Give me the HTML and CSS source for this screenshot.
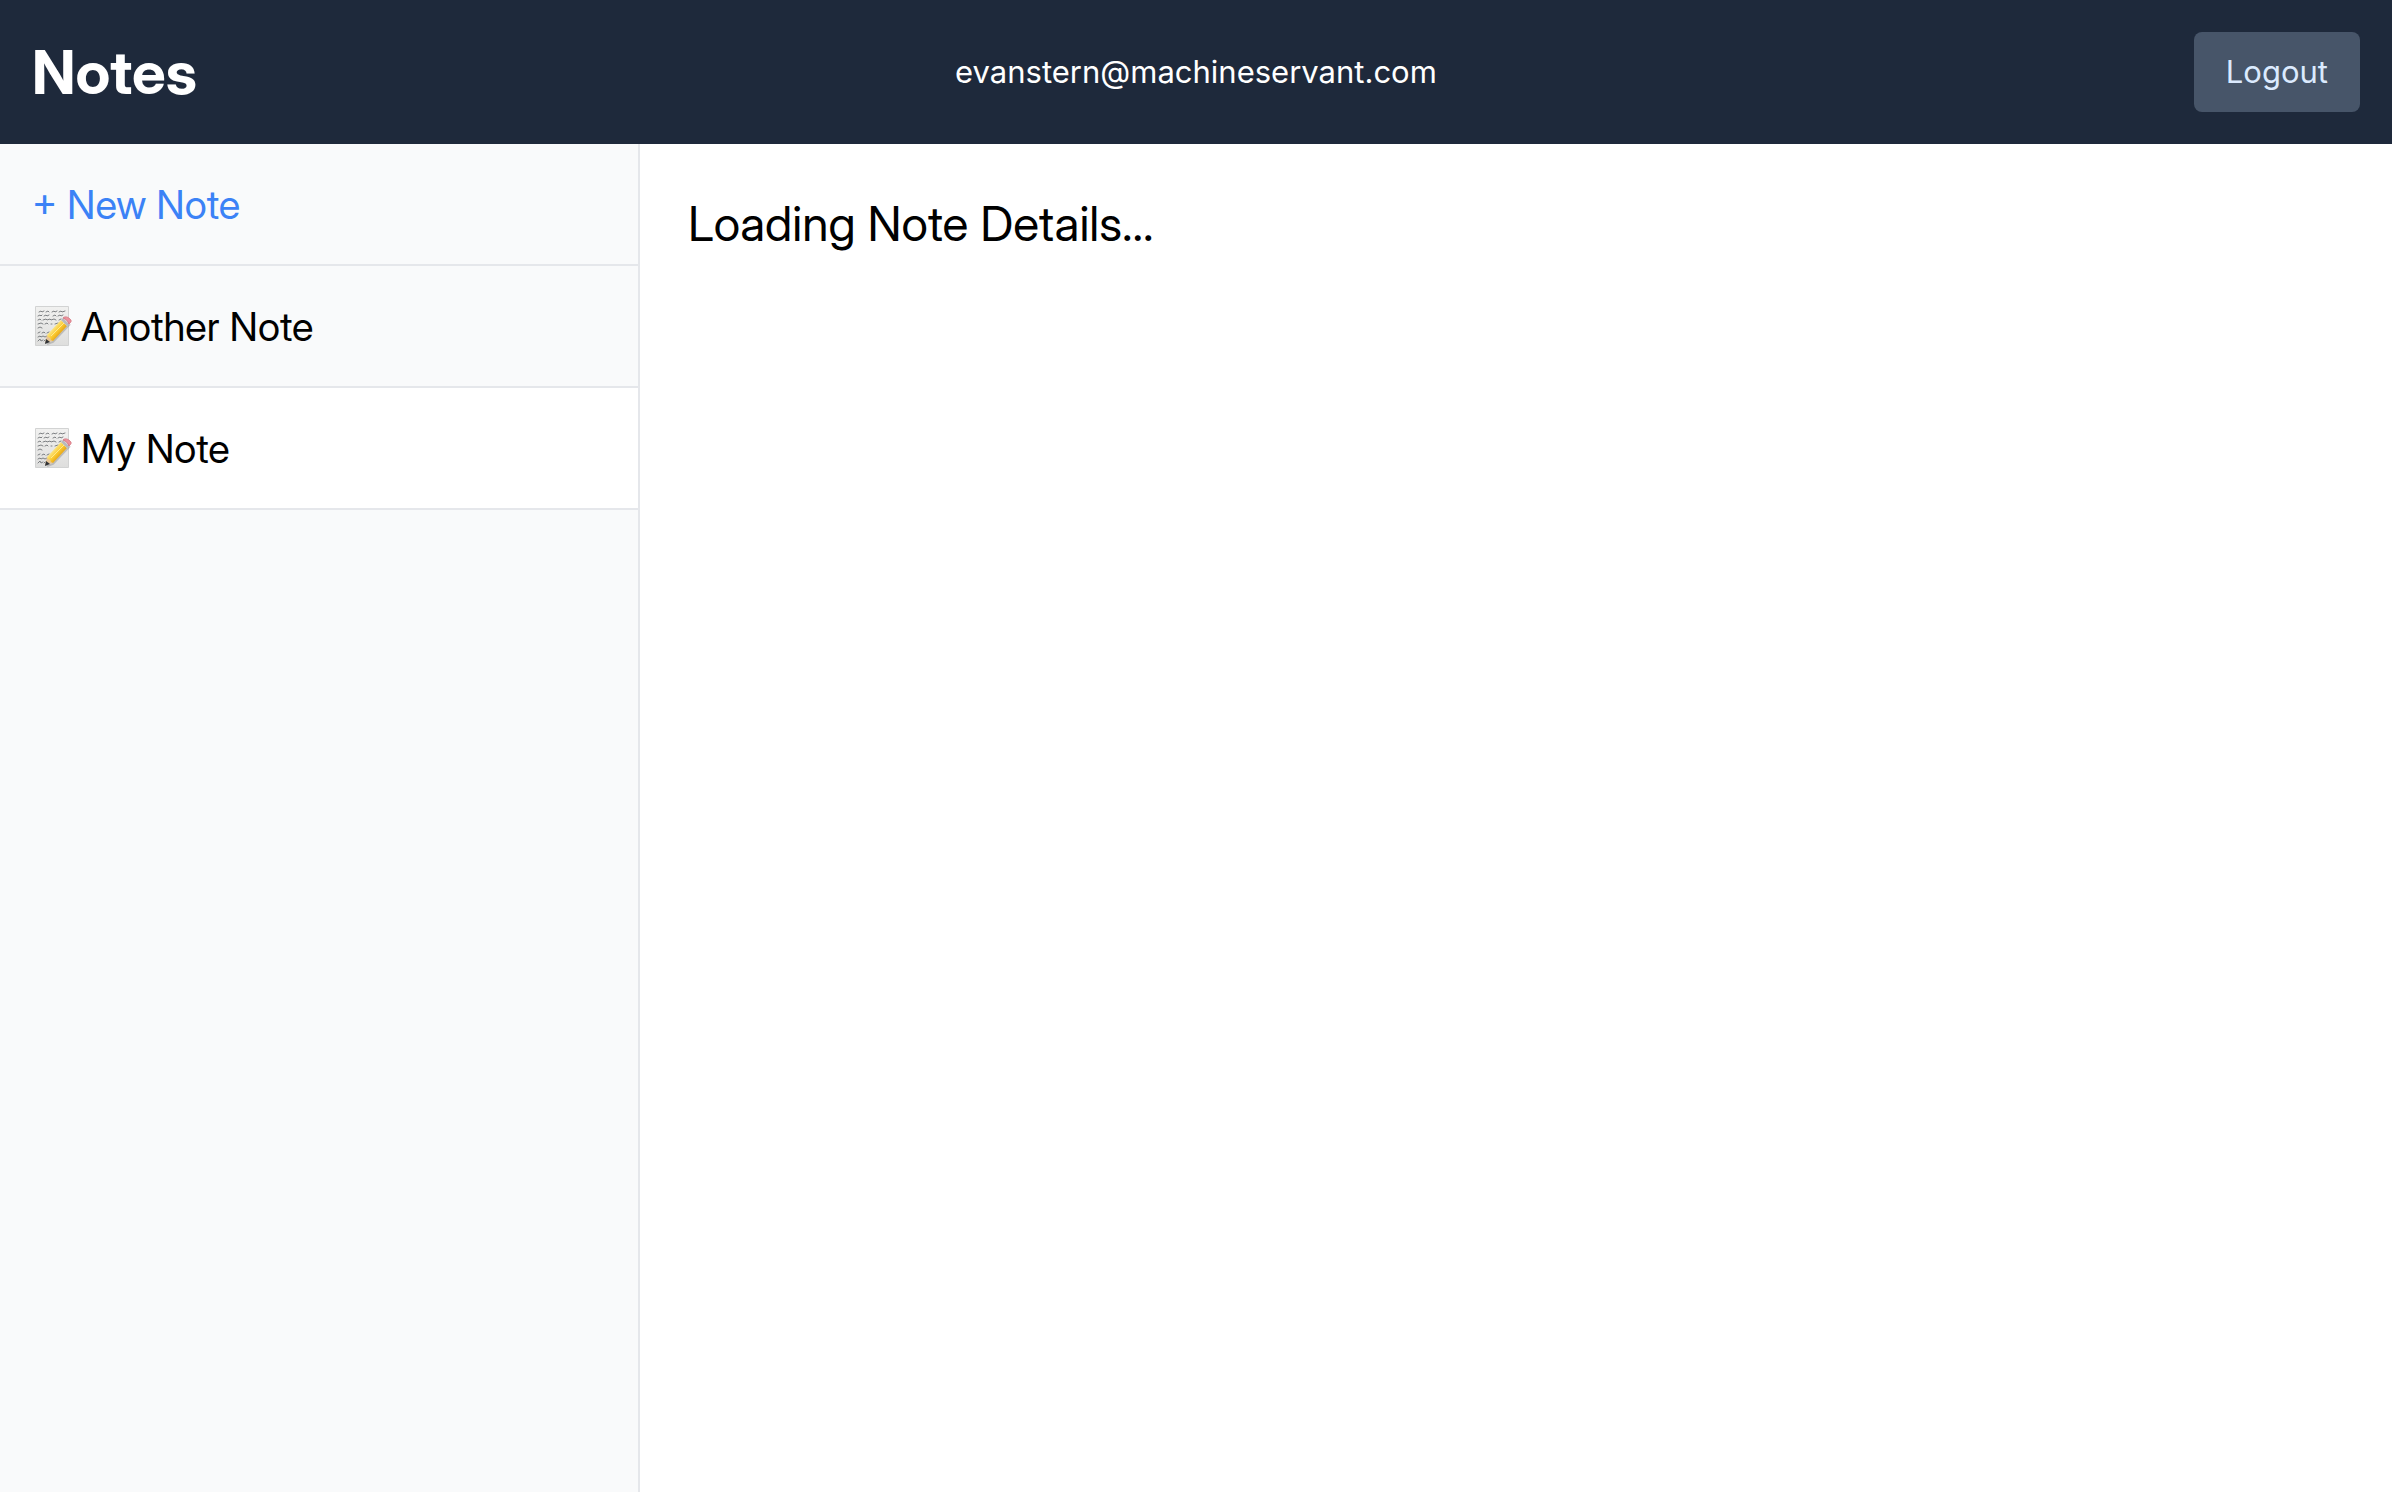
FILE: index.html
```html
<!DOCTYPE html>
<html lang="en">
<head>
<meta charset="utf-8">
<meta name="viewport" content="width=device-width, initial-scale=1">
<title>Notes</title>
<link rel="stylesheet" href="styles.css">
</head>
<body>
<svg class="defs" aria-hidden="true">
  <defs>
    <linearGradient id="paper" x1="0" y1="0" x2="0" y2="1"><stop offset="0" stop-color="#f1f1f0"/><stop offset="1" stop-color="#dededd"/></linearGradient>
    <linearGradient id="pencil" gradientUnits="userSpaceOnUse" x1="19" y1="22" x2="27" y2="29"><stop offset="0" stop-color="#fbe27a"/><stop offset=".4" stop-color="#fcca2f"/><stop offset="1" stop-color="#d8920f"/></linearGradient>
  </defs>
  <symbol id="memo" viewBox="0 0 38 42">
    <path d="M.5.5h33v39H.5z" fill="url(#paper)" stroke="#d2d3d3"/>
    <g fill="none" stroke="#7d8083" stroke-width="1" stroke-linecap="round">
      <path d="M4 6l2-1 1 1 2-1M11 6l2-1 1 1M17 6l2-1 1 1 2-1M24 6l2-1 1 1 3-1"/>
      <path d="M3 10l2-1 1 1 1-1M9 10l2-1 1 1 2-1M18 10l2-1 1 1M23 10l2-1 1 1 2-1"/>
      <path d="M3 14l2-1 1 1M8 14l3-1 1 1 3-1 1 1 3-1 2 1M24 14l2-1"/>
      <path d="M3 18l3-1 2 1M10 18l2-1 1 1M16 18h1M20 18l3-1"/>
      <path d="M3 22l2-1 2 1M3 27l2-1M7 27l2-1 1 1M12 27l2-1"/>
      <path d="M3 31l2-1 1 1 2-1 2 1 2-1M3 35l2-2 1 2 2-1M9 35l1-1"/>
    </g>
    <path d="M12 38l6-2 17-18" fill="none" stroke="#8c8c8c" stroke-opacity=".45" stroke-width="2"/>
    <path d="M10 37l2-8 6 6z" fill="#e7c596"/>
    <path d="M10 38l1-5 4 3z" fill="#303236"/>
    <path d="M12 29L26 14l6 6-14 15-2-1-1-2-2-1z" fill="url(#pencil)"/>
    <path d="M16 30L29 17" stroke="#fee98f" stroke-width="1"/>
    <path d="M26 14l2-2 6 6-2 2z" fill="#b8b9bd"/>
    <path d="M28 12c2-2 5-1 7 1s1 3-1 5c-1-3-3-5-6-6z" fill="#ed929c" stroke="#d77984" stroke-width="1"/>
  </symbol>
</svg>
<header class="header">
  <h1 class="brand"><a href="#">Notes</a></h1>
  <p class="account">evanstern@machineservant.com</p>
  <form class="logout-form"><button class="logout" type="button">Logout</button></form>
</header>
<main class="main">
  <nav class="sidebar" aria-label="Notes">
    <a class="item item-new" href="#new">+ New Note</a>
    <ol class="notes">
      <li><a class="item" href="#another"><svg class="memo" aria-hidden="true"><use href="#memo"/></svg>Another Note</a></li>
      <li><a class="item item-active" href="#my" aria-current="page"><svg class="memo" aria-hidden="true"><use href="#memo"/></svg>My Note</a></li>
    </ol>
  </nav>
  <section class="detail"><p class="loading">Loading Note Details...</p></section>
</main>
</body>
</html>
```
FILE: styles.css
```css
* { box-sizing: border-box; }
body {
  margin: 0;
  min-height: 100vh;
  display: flex;
  flex-direction: column;
  background: #fff;
  color: #000;
  font-family: "Inter Display", Inter, "Liberation Sans", sans-serif;
}
h1, p, ol { margin: 0; padding: 0; }
ol { list-style: none; }
a { color: inherit; text-decoration: none; }
.defs { position: absolute; width: 0; height: 0; }
.header {
  display: grid;
  grid-template-columns: 1fr auto 1fr;
  align-items: center;
  padding: 32px;
  background: #1e293b;
  color: #fff;
}
.brand { font-size: 60px; line-height: 72px; font-weight: 700; }
.account,
.logout { font-family: Inter, "Liberation Sans", sans-serif; font-size: 31px; line-height: 48px; }
.logout-form { justify-self: end; }
.logout {
  display: block;
  border: 0;
  border-radius: 8px;
  padding: 16px 32px;
  background: #475569;
  color: #dbeafe;
  cursor: pointer;
}
.main { flex: 1; display: flex; }
.sidebar {
  flex: none;
  width: 640px;
  border-right: 2px solid #e5e7eb;
  background: #f9fafb;
}
.item {
  display: flex;
  align-items: center;
  gap: 8px;
  padding: 33px 32px 31px;
  border-bottom: 2px solid #e5e7eb;
  font-size: 40px;
  line-height: 56px;
}
.item-new { color: #3b82f6; }
.item-active { background: #fff; }
.memo { flex: none; width: 38px; height: 42px; margin-left: 3px; }
.detail { flex: 1; padding: 48px; }
.loading { font-size: 48px; line-height: 64px; }
```
